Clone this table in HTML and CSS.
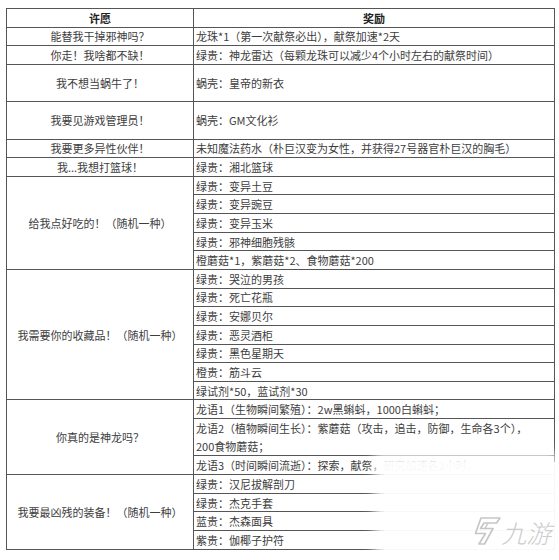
FILE: index.html
```html
<!DOCTYPE html>
<html lang="zh-CN">
<head>
<meta charset="utf-8">
<title>许愿奖励</title>
<link rel="stylesheet" href="styles.css">
</head>
<body>
<div class="page">
<table class="wish">
  <colgroup><col class="c-wish"><col class="c-reward"></colgroup>
  <thead>
    <tr class="r1"><th>许愿</th><th>奖励</th></tr>
  </thead>
  <tbody>
    <tr class="r1"><td class="w">能替我干掉邪神吗？</td><td>龙珠*1（第一次献祭必出），献祭加速*2天</td></tr>
    <tr class="r1"><td class="w">你走！我啥都不缺！</td><td>绿贵：神龙雷达（每颗龙珠可以减少4个小时左右的献祭时间）</td></tr>
    <tr class="r2"><td class="w">我不想当蜗牛了！</td><td>蜗壳：皇帝的新衣</td></tr>
    <tr class="r2"><td class="w">我要见游戏管理员！</td><td>蜗壳：GM文化衫</td></tr>
    <tr class="r1"><td class="w">我要更多异性伙伴！</td><td>未知魔法药水（朴巨汉变为女性，并获得27号器官朴巨汉的胸毛）</td></tr>
    <tr class="r1"><td class="w">我...我想打篮球！</td><td>绿贵：湘北篮球</td></tr>

    <tr class="r1"><td class="w" rowspan="5">给我点好吃的！（随机一种）</td><td>绿贵：变异土豆</td></tr>
    <tr class="r1"><td>绿贵：变异豌豆</td></tr>
    <tr class="r1"><td>绿贵：变异玉米</td></tr>
    <tr class="r1"><td>绿贵：邪神细胞残骸</td></tr>
    <tr class="r1"><td>橙蘑菇*1，紫蘑菇*2、食物蘑菇*200</td></tr>

    <tr class="r1"><td class="w" rowspan="7">我需要你的收藏品！（随机一种）</td><td>绿贵：哭泣的男孩</td></tr>
    <tr class="r1"><td>绿贵：死亡花瓶</td></tr>
    <tr class="r1"><td>绿贵：安娜贝尔</td></tr>
    <tr class="r1"><td>绿贵：恶灵酒柜</td></tr>
    <tr class="r1"><td>绿贵：黑色星期天</td></tr>
    <tr class="r1"><td>橙贵：筋斗云</td></tr>
    <tr class="r1"><td>绿试剂*50，蓝试剂*30</td></tr>

    <tr class="r1"><td class="w" rowspan="3">你真的是神龙吗？</td><td>龙语1（生物瞬间繁殖）：2w黑蝌蚪，1000白蝌蚪；</td></tr>
    <tr class="r2"><td class="two">龙语2（植物瞬间生长）：紫蘑菇（攻击，追击，防御，生命各3个），<br>200食物蘑菇；</td></tr>
    <tr class="r1"><td>龙语3（时间瞬间流逝）：探索，献祭，研究加速各2小时。</td></tr>

    <tr class="r1"><td class="w" rowspan="4">我要最凶残的装备！（随机一种）</td><td>绿贵：汉尼拔解剖刀</td></tr>
    <tr class="r1"><td>绿贵：杰克手套</td></tr>
    <tr class="r1"><td>蓝贵：杰森面具</td></tr>
    <tr class="r1"><td>紫贵：伽椰子护符</td></tr>
  </tbody>
</table>

<div class="mark">
  <svg class="mark-icon" viewBox="0 0 32 32" width="32" height="32" aria-hidden="true">
    <path d="M10 3 H29 L25.5 8 H13 L9.5 13.5 H22 L13.5 29 H8 L14.5 18.5 H4.5 Z" fill="none" stroke="#c6c6c6" stroke-width="1.7" stroke-linejoin="round"/>
    <path d="M17 8 L14 13.5" fill="none" stroke="#c6c6c6" stroke-width="1.4"/>
  </svg>
  <span class="mark-text">九游</span>
</div>
</div>
</body>
</html>
```

FILE: styles.css
```css
html, body {
  margin: 0;
  padding: 0;
  background: #ffffff;
}

.page {
  position: relative;
  width: 559px;
  height: 560px;
  overflow: hidden;
  padding: 8px 0 0 6px;
  box-sizing: border-box;
}

.wish {
  border-collapse: collapse;
  width: 548px;
  table-layout: fixed;
  font-family: "Microsoft YaHei", "Noto Sans CJK SC", "Noto Sans", sans-serif;
  font-size: 11px;
  color: #3d3d3d;
  border: 1px solid #4a4a4a;
}

.c-wish { width: 187px; }
.c-reward { width: 361px; }

.wish th,
.wish td {
  border: 1px solid #555555;
  padding: 0 2px;
  line-height: 16px;
  vertical-align: middle;
  white-space: nowrap;
  overflow: hidden;
}

.wish td.two { line-height: 18px; }

.wish th {
  font-weight: bold;
  color: #222222;
  text-align: center;
}

.wish td { text-align: left; }
.wish td.w { text-align: center; }

.wish tr.r1 { height: 18.65px; }
.wish tr.r2 { height: 37.3px; }

.mark {
  position: absolute;
  left: 384px;
  top: 462px;
  right: 0;
  bottom: 0;
  background: rgba(255, 255, 255, 0.96);
  box-shadow: -6px -6px 10px 4px rgba(255, 255, 255, 0.9);
  display: flex;
  align-items: flex-end;
  justify-content: flex-end;
  gap: 1px;
  padding: 0 5px 13px 0;
  box-sizing: border-box;
}

.mark-icon {
  display: block;
  flex: none;
}

.mark-text {
  font-family: "Noto Sans CJK SC", sans-serif;
  font-size: 25px;
  line-height: 30px;
  font-weight: 300;
  color: #cccccc;
  transform: skewX(-14deg);
  white-space: nowrap;
  flex: none;
}
```
